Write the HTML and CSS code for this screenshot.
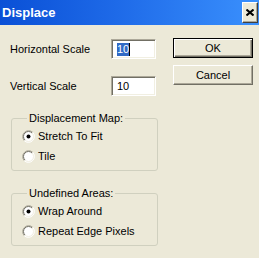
FILE: index.html
```html
<!DOCTYPE html>
<html>
<head>
<meta charset="utf-8">
<link rel="stylesheet" href="styles.css">
</head>
<body>
<div class="window">
  <div class="titlebar">
    <span class="title">Displace</span>
    <div class="close"><svg width="8" height="7" viewBox="0 0 8 7"><path d="M0.5 0.5 L7.5 6.5 M7.5 0.5 L0.5 6.5" stroke="#000" stroke-width="2" fill="none"/></svg></div>
  </div>
  <div class="content">
    <div class="left">
      <div class="field">
        <span class="label">Horizontal Scale</span>
        <div class="textbox"><span class="sel">10</span><span class="caret"></span></div>
      </div>
      <div class="field field-second">
        <span class="label">Vertical Scale</span>
        <div class="textbox"><span class="val">10</span></div>
      </div>
      <fieldset class="group">
        <legend>Displacement Map:</legend>
        <div class="opt"><svg class="radio" width="13" height="13" viewBox="0 0 13 13"><circle cx="6.5" cy="6.5" r="5.5" fill="#fff"/><path d="M2.26 10.74 A6 6 0 0 1 10.74 2.26" stroke="#ACA899" fill="none"/><path d="M2.96 10.04 A5 5 0 0 1 10.04 2.96" stroke="#716F64" fill="none"/><path d="M10.74 2.26 A6 6 0 0 1 2.26 10.74" stroke="#fff" fill="none"/><path d="M10.04 2.96 A5 5 0 0 1 2.96 10.04" stroke="#F1EFE2" fill="none"/><circle cx="6.5" cy="6.5" r="2" fill="#000"/></svg><span>Stretch To Fit</span></div>
        <div class="opt"><svg class="radio" width="13" height="13" viewBox="0 0 13 13"><circle cx="6.5" cy="6.5" r="5.5" fill="#fff"/><path d="M2.26 10.74 A6 6 0 0 1 10.74 2.26" stroke="#ACA899" fill="none"/><path d="M2.96 10.04 A5 5 0 0 1 10.04 2.96" stroke="#716F64" fill="none"/><path d="M10.74 2.26 A6 6 0 0 1 2.26 10.74" stroke="#fff" fill="none"/><path d="M10.04 2.96 A5 5 0 0 1 2.96 10.04" stroke="#F1EFE2" fill="none"/></svg><span>Tile</span></div>
      </fieldset>
      <fieldset class="group">
        <legend>Undefined Areas:</legend>
        <div class="opt"><svg class="radio" width="13" height="13" viewBox="0 0 13 13"><circle cx="6.5" cy="6.5" r="5.5" fill="#fff"/><path d="M2.26 10.74 A6 6 0 0 1 10.74 2.26" stroke="#ACA899" fill="none"/><path d="M2.96 10.04 A5 5 0 0 1 10.04 2.96" stroke="#716F64" fill="none"/><path d="M10.74 2.26 A6 6 0 0 1 2.26 10.74" stroke="#fff" fill="none"/><path d="M10.04 2.96 A5 5 0 0 1 2.96 10.04" stroke="#F1EFE2" fill="none"/><circle cx="6.5" cy="6.5" r="2" fill="#000"/></svg><span>Wrap Around</span></div>
        <div class="opt"><svg class="radio" width="13" height="13" viewBox="0 0 13 13"><circle cx="6.5" cy="6.5" r="5.5" fill="#fff"/><path d="M2.26 10.74 A6 6 0 0 1 10.74 2.26" stroke="#ACA899" fill="none"/><path d="M2.96 10.04 A5 5 0 0 1 10.04 2.96" stroke="#716F64" fill="none"/><path d="M10.74 2.26 A6 6 0 0 1 2.26 10.74" stroke="#fff" fill="none"/><path d="M10.04 2.96 A5 5 0 0 1 2.96 10.04" stroke="#F1EFE2" fill="none"/></svg><span>Repeat Edge Pixels</span></div>
      </fieldset>
    </div>
    <div class="right">
      <div class="btn btn-default">OK</div>
      <div class="btn">Cancel</div>
    </div>
  </div>
</div>
</body>
</html>
```
FILE: styles.css
```css
html, body {
  margin: 0;
  padding: 0;
  width: 259px;
  height: 258px;
  overflow: hidden;
  background: #ECE9D8;
  font-family: "Liberation Sans", Arial, sans-serif;
  font-size: 11px;
  color: #000;
}

.window {
  width: 259px;
  height: 258px;
  background: #ECE9D8;
}

.titlebar {
  height: 25px;
  box-sizing: border-box;
  padding: 0 1px 0 2px;
  display: flex;
  align-items: center;
  justify-content: space-between;
  background: linear-gradient(to right, #0A50D6 0%, #1E6AE8 45%, #3A90FD 100%);
}

.title {
  color: #fff;
  font-weight: bold;
  font-size: 13px;
  line-height: 15px;
}

.close {
  width: 16px;
  height: 21px;
  box-sizing: border-box;
  background: #ECE9D8;
  border: 1px solid;
  border-color: #fff #404040 #404040 #fff;
  box-shadow: inset -1px -1px #ACA899;
  display: flex;
  align-items: center;
  justify-content: center;
  margin-top: -1px;
}

.close svg {
  display: block;
}

.content {
  display: flex;
  padding-top: 13px;
}

.left {
  width: 173px;
  box-sizing: border-box;
  padding: 1px 0 0 10px;
  display: flex;
  flex-direction: column;
}

.field {
  width: 146px;
  height: 20px;
  display: flex;
  align-items: center;
  justify-content: space-between;
}

.field-second {
  margin-top: 17px;
}

.textbox {
  width: 45px;
  height: 20px;
  box-sizing: border-box;
  background: #fff;
  border: 1px solid;
  border-color: #ACA899 #fff #fff #ACA899;
  box-shadow: inset 1px 1px #716F64, inset -1px -1px #F1EFE2;
  padding-left: 5px;
  display: flex;
  align-items: center;
}

.sel {
  background: #316AC5;
  color: #fff;
  line-height: 13px;
}

.val {
  line-height: 13px;
}

.caret {
  width: 1px;
  height: 13px;
  background: #000;
}

.group {
  margin: 16px 0 0 1px;
  padding: 1px 0 4px 10px;
  width: 147px;
  box-sizing: border-box;
  min-inline-size: 0;
  border: 1px solid #D0D0BF;
  border-radius: 3px;
}

.group legend {
  padding: 0 2px;
  margin-left: 5px;
  line-height: 13px;
}

.opt {
  height: 20px;
  display: flex;
  align-items: center;
  gap: 3px;
}

.radio {
  display: block;
  flex: none;
}

.right {
  display: flex;
  flex-direction: column;
  gap: 7px;
}

.btn {
  width: 80px;
  height: 20px;
  box-sizing: border-box;
  display: flex;
  align-items: center;
  justify-content: center;
  background: #ECE9D8;
  border: 1px solid;
  border-color: #fff #716F64 #716F64 #fff;
  box-shadow: inset -1px -1px #ACA899;
}

.btn-default {
  border: 1px solid #000;
  box-shadow: inset 1px 1px #fff, inset -1px -1px #716F64, inset -2px -2px #ACA899;
}
```
